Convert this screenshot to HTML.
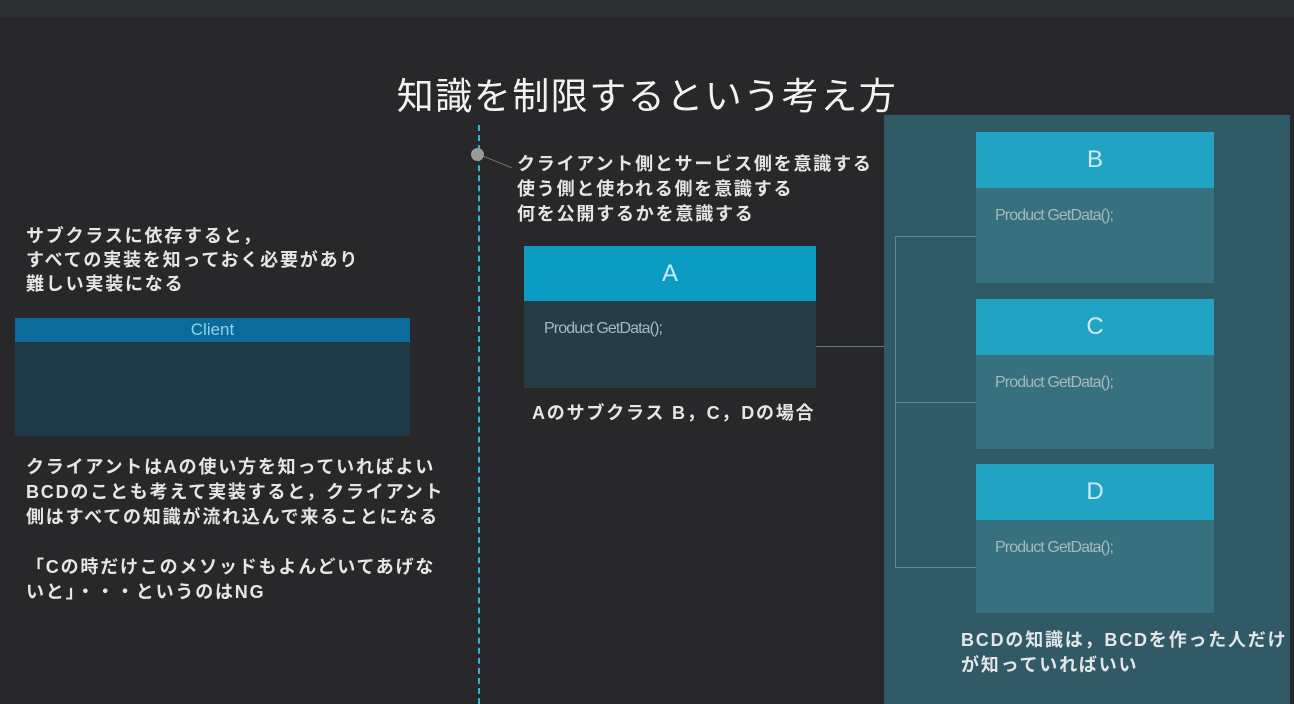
<!DOCTYPE html>
<html><head><meta charset="utf-8"><style>
*{margin:0;padding:0;box-sizing:border-box}
body{width:1294px;height:704px;background:#28282b;position:relative;overflow:hidden;font-family:"Liberation Sans","Noto Sans CJK JP",sans-serif;color:#e8e8e8}
.a{position:absolute}
.t{font-weight:bold;font-size:18px;line-height:24px;color:#e6e6e6;letter-spacing:1.8px;white-space:nowrap}
.pg{font-size:16px;color:#a8b8bc;letter-spacing:-0.9px}
.hd{display:flex;align-items:center;justify-content:center;font-size:24px;color:#cfeaf2}
</style></head><body>
<div class="a" style="left:0;top:0;width:1294px;height:17px;background:#2d2e31"></div>
<div class="a" style="left:0;top:66px;width:1294px;text-align:center;font-size:37px;color:#f2f2f2;letter-spacing:1.5px">知識を制限するという考え方</div>
<div class="a" style="left:478px;top:125px;height:579px;border-left:2px dashed #3bb0cc"></div>
<div class="a" style="left:471px;top:148px;width:13px;height:13px;border-radius:50%;background:#9a9a9a"></div>
<div class="a" style="left:484px;top:156px;width:30px;height:1px;background:#777;transform:rotate(22deg);transform-origin:0 0"></div>
<div class="a t" style="left:26px;top:224px">サブクラスに依存すると，<br>すべての実装を知っておく必要があり<br>難しい実装になる</div>
<div class="a" style="left:15px;top:318px;width:395px;height:24px;background:#0b6c9c;color:#8fd0ea;text-align:center;font-size:17px;line-height:24px">Client</div>
<div class="a" style="left:15px;top:342px;width:395px;height:94px;background:#1e3a47"></div>
<div class="a t" style="left:26px;top:455px;line-height:25px">クライアントはAの使い方を知っていればよい<br>BCDのことも考えて実装すると，クライアント<br>側はすべての知識が流れ込んで来ることになる<br><br>「Cの時だけこのメソッドもよんどいてあげな<br>いと」・・・というのはNG</div>
<div class="a t" style="left:517px;top:152px;line-height:25px">クライアント側とサービス側を意識する<br>使う側と使われる側を意識する<br>何を公開するかを意識する</div>
<div class="a hd" style="left:524px;top:246px;width:292px;height:55px;background:#0c9bc3">A</div>
<div class="a" style="left:524px;top:301px;width:292px;height:87px;background:#263d46"></div>
<div class="a pg" style="left:544px;top:320px">Product GetData();</div>
<div class="a t" style="left:532px;top:401px">Aのサブクラス B，C，Dの場合</div>
<div class="a" style="left:816px;top:346px;width:80px;height:1px;background:#5a7c86"></div>
<div class="a" style="left:884px;top:115px;width:406px;height:589px;background:#2f5a66"></div>
<div class="a" style="left:895px;top:236px;width:1px;height:331px;background:#5a8a96"></div>
<div class="a" style="left:895px;top:236px;width:81px;height:1px;background:#5a8a96"></div>
<div class="a" style="left:895px;top:402px;width:81px;height:1px;background:#5a8a96"></div>
<div class="a" style="left:895px;top:567px;width:81px;height:1px;background:#5a8a96"></div>
<div class="a hd" style="left:976px;top:132px;width:238px;height:56px;background:#21a3c4">B</div>
<div class="a" style="left:976px;top:188px;width:238px;height:95px;background:#37707e"></div>
<div class="a pg" style="left:995px;top:207px">Product GetData();</div>
<div class="a hd" style="left:976px;top:299px;width:238px;height:56px;background:#21a3c4">C</div>
<div class="a" style="left:976px;top:355px;width:238px;height:94px;background:#37707e"></div>
<div class="a pg" style="left:995px;top:374px">Product GetData();</div>
<div class="a hd" style="left:976px;top:464px;width:238px;height:56px;background:#21a3c4">D</div>
<div class="a" style="left:976px;top:520px;width:238px;height:93px;background:#37707e"></div>
<div class="a pg" style="left:995px;top:539px">Product GetData();</div>
<div class="a t" style="left:961px;top:628px;line-height:25px">BCDの知識は，BCDを作った人だけ<br>が知っていればいい</div>
</body></html>
